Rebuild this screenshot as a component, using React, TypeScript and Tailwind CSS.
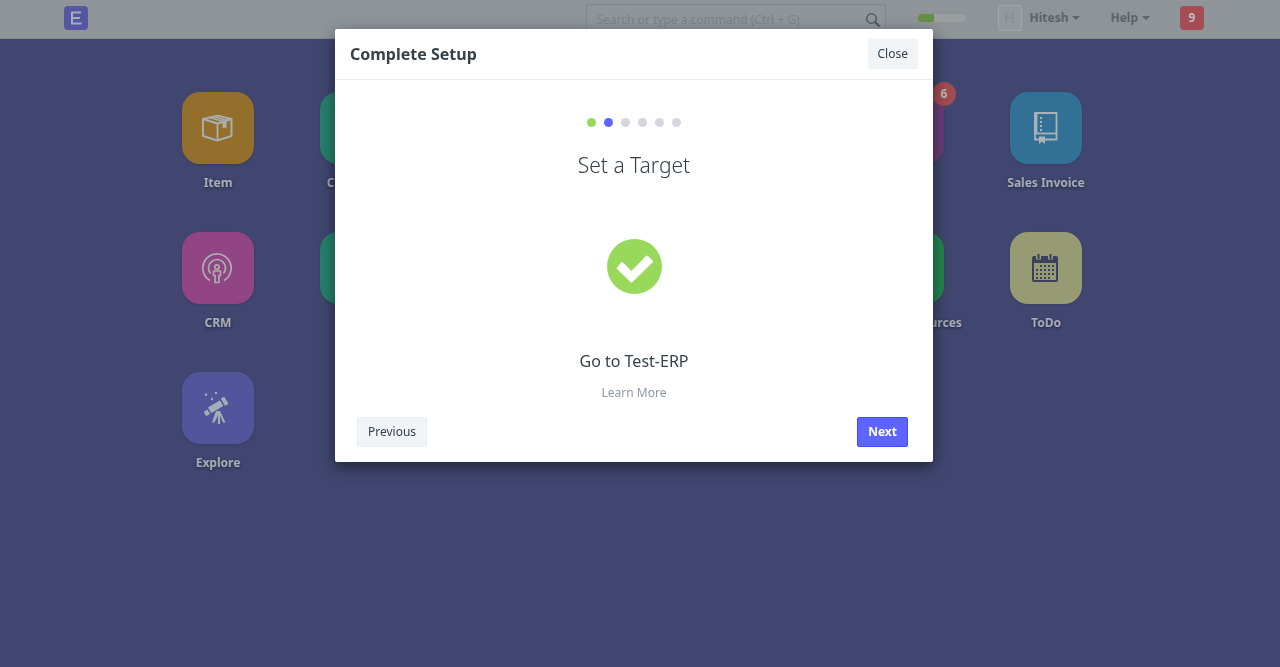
import React from "react";
import { clsx } from "clsx";

const BoxIcon = () => (
  <svg width="32" height="32" viewBox="0 0 32 32" fill="none" stroke="#a9aeb0" strokeWidth="1.9" strokeLinejoin="round">
    <path d="M2 7 17 3.6 30.500 7v17L16.500 28.500 2 24z" />
    <path d="M2 7l14.500 4.500L30.500 7M16.500 11.500v17" />
    <path d="M8.500 5.500l14 4M12.500 4.600l14 3.800" strokeWidth="1.6" />
    <path d="M21.500 10v6.500l2-1 2 1V8.800z" fill="#a9aeb0" stroke="none" />
  </svg>
);

const BroadcastIcon = () => (
  <svg width="32" height="32" viewBox="0 0 32 32" fill="none" stroke="#a9aeb0" strokeWidth="1.7">
    <path d="M9 28.500a14.200 14.200 0 1 1 14 0" />
    <path d="M9.500 21.500a8.500 8.500 0 1 1 13 0" />
    <circle cx="16" cy="15" r="2.2" />
    <path d="M12.500 19h7v4.500h-1.600v7h-3.800v-7h-1.600z" strokeLinejoin="round" />
  </svg>
);

const TelescopeIcon = () => (
  <svg width="32" height="32" viewBox="0 0 32 32" fill="#a4aeb5">
    <g transform="rotate(-31 16 13)">
      <rect x="1" y="12" width="4.500" height="5" rx="0.8" />
      <rect x="7" y="10.500" width="14" height="6.500" rx="0.8" />
      <rect x="22.500" y="9.500" width="4" height="8.500" rx="0.8" />
    </g>
    <path d="M15 19h4l5.500 11.500h-2.400L19 23.500v9h-2v-9l-3.600 7H11z" />
    <circle cx="5" cy="2.800" r="1.200" />
    <circle cx="15" cy="0.900" r="1.200" />
    <circle cx="11" cy="7" r="1.200" />
  </svg>
);

const NotebookIcon = () => (
  <svg width="32" height="34" viewBox="0 0 32 34" fill="none" stroke="#a9b3b8" strokeWidth="1.8">
    <path d="M6 2h21.500v26.500H6z" strokeLinejoin="round" />
    <path d="M6.800 2v21" strokeWidth="3.200" />
    <path d="M6 22.500h21.500" />
    <path d="M12 6v14" strokeWidth="2" strokeDasharray="2 2" />
    <path d="M10 25.500h6V33l-3-2.500-3 2.500z" fill="#a9b3b8" stroke="none" />
  </svg>
);

const CalendarIcon = () => (
  <svg width="32" height="32" viewBox="0 0 32 32">
    <path fill="#3b415d" fillRule="evenodd" d="M5 4h2v3.500h5V4h7v3.500h5V4h3q2 0 2 2v22q0 2-2 2H5q-2 0-2-2V6q0-2 2-2zm0 7v17h22V11z" />
    <path d="M9.500 2v5M21.500 2v5" stroke="#3b415d" strokeWidth="2" />
    <path d="M11 14h16M7 18h20M7 22h20M7 26h16" stroke="#3b415d" strokeWidth="2.200" strokeDasharray="2 2" />
  </svg>
);

type Tile = {
  label?: string;
  place: string;
  color: string;
  icon?: React.ReactNode;
  count?: number;
};

const tiles: Tile[] = [
  { label: "Item", place: "col-start-1 row-start-1", color: "bg-[#936f2b]", icon: <BoxIcon /> },
  { label: "Customer", place: "col-start-2 row-start-1", color: "bg-[#25806c]" },
  { place: "col-start-6 row-start-1", color: "bg-[#663d78]", count: 6 },
  { label: "Sales Invoice", place: "col-start-7 row-start-1", color: "bg-[#327195]", icon: <NotebookIcon /> },
  { label: "CRM", place: "col-start-1 row-start-2", color: "bg-[#914585]", icon: <BroadcastIcon /> },
  { place: "col-start-2 row-start-2", color: "bg-[#25806c]" },
  { label: "Human Resources", place: "col-start-6 row-start-2", color: "bg-[#258550]" },
  { label: "ToDo", place: "col-start-7 row-start-2", color: "bg-[#979b73]", icon: <CalendarIcon /> },
  { label: "Explore", place: "col-start-1 row-start-3", color: "bg-[#51559b]", icon: <TelescopeIcon /> },
];

function DeskTile({ label, place, color, icon, count }: Tile) {
  return (
    <a href="#" className={clsx("flex h-[140px] flex-col items-center", place)}>
      <span className={clsx("relative flex size-[72px] items-center justify-center rounded-[18px] pr-0.5 shadow-sm", color)}>
        {icon}
        {count && (
          <span className="absolute -top-2.5 -right-3 flex size-6 items-center justify-center rounded-full bg-[#a04b4f] text-xs font-bold text-[#b9b5b4]">
            {count}
          </span>
        )}
      </span>
      <span className="mt-[11px] whitespace-nowrap text-xs leading-4 font-bold text-[#a6abb7] [text-shadow:0_1px_3px_#22253f]">
        {label}
      </span>
    </a>
  );
}

const Caret = () => (
  <span className="border-x-4 border-t-4 border-x-transparent border-t-[#5b636b]" />
);

function Navbar() {
  return (
    <header className="h-[39px] border-b border-[#838992] bg-[#8e9498] pr-3">
      <div className="mx-auto flex h-9 max-w-[1140px] items-center">
        <a href="#" className="flex size-6 items-center justify-center rounded-sm bg-[#54579f]" aria-label="Home">
          <svg width="12" height="14" viewBox="0 0 12 14" fill="none" stroke="#a7abc2" strokeWidth="2">
            <path d="M11 1.500H2v11h9.500M2 7h8" />
          </svg>
        </a>
        <label className="mt-1 ml-auto flex h-8 w-[300px] items-center rounded-t-xs border border-[#81888c] bg-[#8f9699] pr-1 pl-2.5">
          <input
            type="text"
            aria-label="Search"
            placeholder="Search or type a command (Ctrl + G)"
            className="min-w-0 flex-1 text-xs text-[#4a5157] outline-none placeholder:text-[#7b8388]"
          />
          <svg width="16" height="16" viewBox="0 0 16 16" fill="none" stroke="#4d5459" strokeWidth="1.300">
            <circle cx="6.500" cy="6.500" r="4.800" />
            <path d="m10 10 4.500 4.500" strokeWidth="1.800" />
          </svg>
        </label>
        <div className="ml-8 flex h-2 w-12 overflow-hidden rounded-sm bg-[#999fa1]">
          <span className="w-1/3 bg-[#659043]" />
        </div>
        <button className="ml-8 flex items-center gap-1 text-xs font-bold text-[#5b636b]">
          <span className="mr-1 flex h-[26px] w-6 items-center justify-center rounded-xs border border-[#a0a6a9] bg-[#939a9d] text-sm font-normal text-[#838a8e]">
            H
          </span>
          Hitesh
          <Caret />
        </button>
        <button className="ml-[30px] flex items-center gap-1 text-xs font-bold text-[#5b636b]">
          Help
          <Caret />
        </button>
        <button className="ml-[30px] flex size-6 items-center justify-center rounded-sm bg-[#a54d52] text-xs font-bold text-[#bfbdbd]">
          9
        </button>
      </div>
    </header>
  );
}

const steps = [
  "bg-[#98d85b]",
  "bg-[#5e64ff]",
  "bg-[#d3d6da]",
  "bg-[#d3d6da]",
  "bg-[#d3d6da]",
  "bg-[#d3d6da]",
];

function SetupDialog() {
  return (
    <div className="fixed inset-0 flex items-start justify-center pt-[29px] pr-3">
      <div
        role="dialog"
        aria-labelledby="setup-title"
        className="w-full max-w-[598px] rounded-xs bg-white text-[#36414c] shadow-[0_5px_15px_rgba(0,0,0,0.5)]"
      >
        <div className="flex h-[51px] items-center justify-between border-b border-[#ebeef0] px-[15px]">
          <h4 id="setup-title" className="text-base font-bold">
            Complete Setup
          </h4>
          <button className="h-[30px] rounded-xs bg-[#f0f4f7] px-2.5 text-xs">Close</button>
        </div>
        <div className="flex flex-col items-center pt-[38px]">
          <div className="flex gap-2">
            {steps.map((color, i) => (
              <span key={i} className={clsx("size-[9px] rounded-full", color)} />
            ))}
          </div>
          <h2 className="mt-6 text-[21px] leading-7 font-light">Set a Target</h2>
          <svg className="mt-[60px]" width="55" height="55" viewBox="0 0 55 55">
            <circle cx="27.500" cy="27.500" r="27.500" fill="#98d85b" />
            <path
              d="m10 28.500 4-5q1-1 2 0l8.500 8.500L39 17q1-1 2 0l4.500 4.500q1 1 0 2L25.500 43q-1 1-2 0L10 30q-1-1 0-1.500z"
              fill="#fff"
            />
          </svg>
          <a href="#" className="mt-[55px] text-base">
            Go to Test-ERP
          </a>
          <a href="#" className="mt-3 text-xs text-[#8d99a6]">
            Learn More
          </a>
        </div>
        <div className="flex justify-between pt-4 pr-[25px] pb-[15px] pl-[22px]">
          <button className="h-[30px] rounded-xs border border-[#ebeff3] bg-[#f0f4f7] px-2.5 text-xs">Previous</button>
          <button className="h-[30px] rounded-xs border border-[#444bff] bg-[#5e64ff] px-2.5 text-xs font-bold text-white">
            Next
          </button>
        </div>
      </div>
    </div>
  );
}

export default function App() {
  return (
    <div className="min-h-screen bg-[#40466f] font-['Noto_Sans',sans-serif]">
      <Navbar />
      <main className="pt-[53px] pr-4">
        <div className="mx-auto grid max-w-[966px] grid-cols-7">
          {tiles.map((tile, i) => (
            <DeskTile key={i} {...tile} />
          ))}
        </div>
      </main>
      <SetupDialog />
    </div>
  );
}
